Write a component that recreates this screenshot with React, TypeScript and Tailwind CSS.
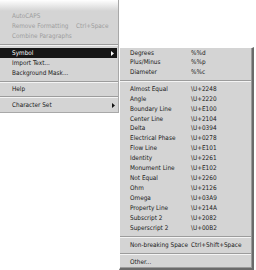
import React from 'react';

type Row = { label: string; shortcut: string };

const Arrow: React.FC<{ light?: boolean }> = ({ light }) => (
  <svg width="3" height="5" viewBox="0 0 3 5" className="shrink-0">
    <path d="M0 0 L3 2.5 L0 5 Z" fill={light ? '#ffffff' : '#111111'} />
  </svg>
);

const Sep: React.FC<{ h: string }> = ({ h }) => (
  <div className={`flex flex-col justify-center ${h}`}>
    <div className="h-px bg-[#9c9c9c]" />
    <div className="h-px bg-[#f4f4f4]" />
  </div>
);

const symbolRows: Row[] = [
  { label: 'Almost Equal', shortcut: '\\U+2248' },
  { label: 'Angle', shortcut: '\\U+2220' },
  { label: 'Boundary Line', shortcut: '\\U+E100' },
  { label: 'Center Line', shortcut: '\\U+2104' },
  { label: 'Delta', shortcut: '\\U+0394' },
  { label: 'Electrical Phase', shortcut: '\\U+0278' },
  { label: 'Flow Line', shortcut: '\\U+E101' },
  { label: 'Identity', shortcut: '\\U+2261' },
  { label: 'Monument Line', shortcut: '\\U+E102' },
  { label: 'Not Equal', shortcut: '\\U+2260' },
  { label: 'Ohm', shortcut: '\\U+2126' },
  { label: 'Omega', shortcut: '\\U+03A9' },
  { label: 'Property Line', shortcut: '\\U+214A' },
  { label: 'Subscript 2', shortcut: '\\U+2082' },
  { label: 'Superscript 2', shortcut: '\\U+00B2' },
];

const SubRow: React.FC<{ label: string; shortcut?: string; h?: string }> = ({ label, shortcut, h = 'h-[10px]' }) => (
  <div className={`flex items-center ${h} pl-[10px] text-[#1a1a1a]`}>
    <span className="w-[61px] whitespace-nowrap">{label}</span>
    {shortcut && <span className="whitespace-nowrap">{shortcut}</span>}
  </div>
);

export default function App() {
  return (
    <div
      className="flex w-[256px] h-[270px] overflow-hidden bg-white text-[6.4px] leading-none"
      style={{ fontFamily: '"DejaVu Sans Condensed", "Liberation Sans", Arial, sans-serif' }}
    >
      {/* main menu */}
      <div className="flex flex-col w-[119px] h-[113px] bg-[#d4d4d4] border-r border-b border-[#a8a8a8]">
        <div className="h-[11px] bg-gradient-to-b from-white to-[#d4d4d4]" />
        <div className="flex items-center h-[10px] pl-[12px] text-[#9e9e9e]">AutoCAPS</div>
        <div className="flex items-center h-[10px] pl-[12px] text-[#9e9e9e]">
          <span className="w-[64px] whitespace-nowrap">Remove Formatting</span>
          <span>Ctrl+Space</span>
        </div>
        <div className="flex items-center h-[10px] pl-[12px] text-[#9e9e9e]">Combine Paragraphs</div>
        <Sep h="h-[7px]" />
        <div className="flex items-center justify-between h-[10px] pl-[12px] pr-[3px] mr-px bg-[#161616] text-white">
          <span>Symbol</span>
          <Arrow light />
        </div>
        <div className="flex items-center h-[10px] pl-[12px] text-[#1a1a1a]">Import Text...</div>
        <div className="flex items-center h-[10px] pl-[12px] text-[#1a1a1a]">Background Mask...</div>
        <Sep h="h-[7px]" />
        <div className="flex items-center h-[9px] pl-[12px] text-[#1a1a1a]">Help</div>
        <Sep h="h-[6px]" />
        <div className="flex items-center justify-between h-[10px] pl-[12px] pr-[3px] text-[#1a1a1a]">
          <span>Character Set</span>
          <Arrow />
        </div>
      </div>

      {/* symbol submenu */}
      <div className="flex flex-col mt-[47px] w-[135px] h-[223px] bg-[#d4d4d4] border-l border-t border-l-white border-t-white border-r-2 border-b-2 border-r-[#6a6a6a] border-b-[#6a6a6a]">
        <div className="flex flex-col border-r border-b border-[#9a9a9a] h-full">
          <SubRow label="Degrees" shortcut="%%d" />
          <SubRow label="Plus/Minus" shortcut="%%p" />
          <SubRow label="Diameter" shortcut="%%c" />
          <Sep h="h-[7px]" />
          {symbolRows.map((r) => (
            <SubRow key={r.label} label={r.label} shortcut={r.shortcut} h="h-[10.2px]" />
          ))}
          <Sep h="h-[8px]" />
          <div className="flex items-center gap-[3px] h-[10px] pl-[10px] text-[#1a1a1a] whitespace-nowrap">
            <span>Non-breaking Space</span>
            <span>Ctrl+Shift+Space</span>
          </div>
          <Sep h="h-[7px]" />
          <SubRow label="Other..." />
        </div>
      </div>
    </div>
  );
}
